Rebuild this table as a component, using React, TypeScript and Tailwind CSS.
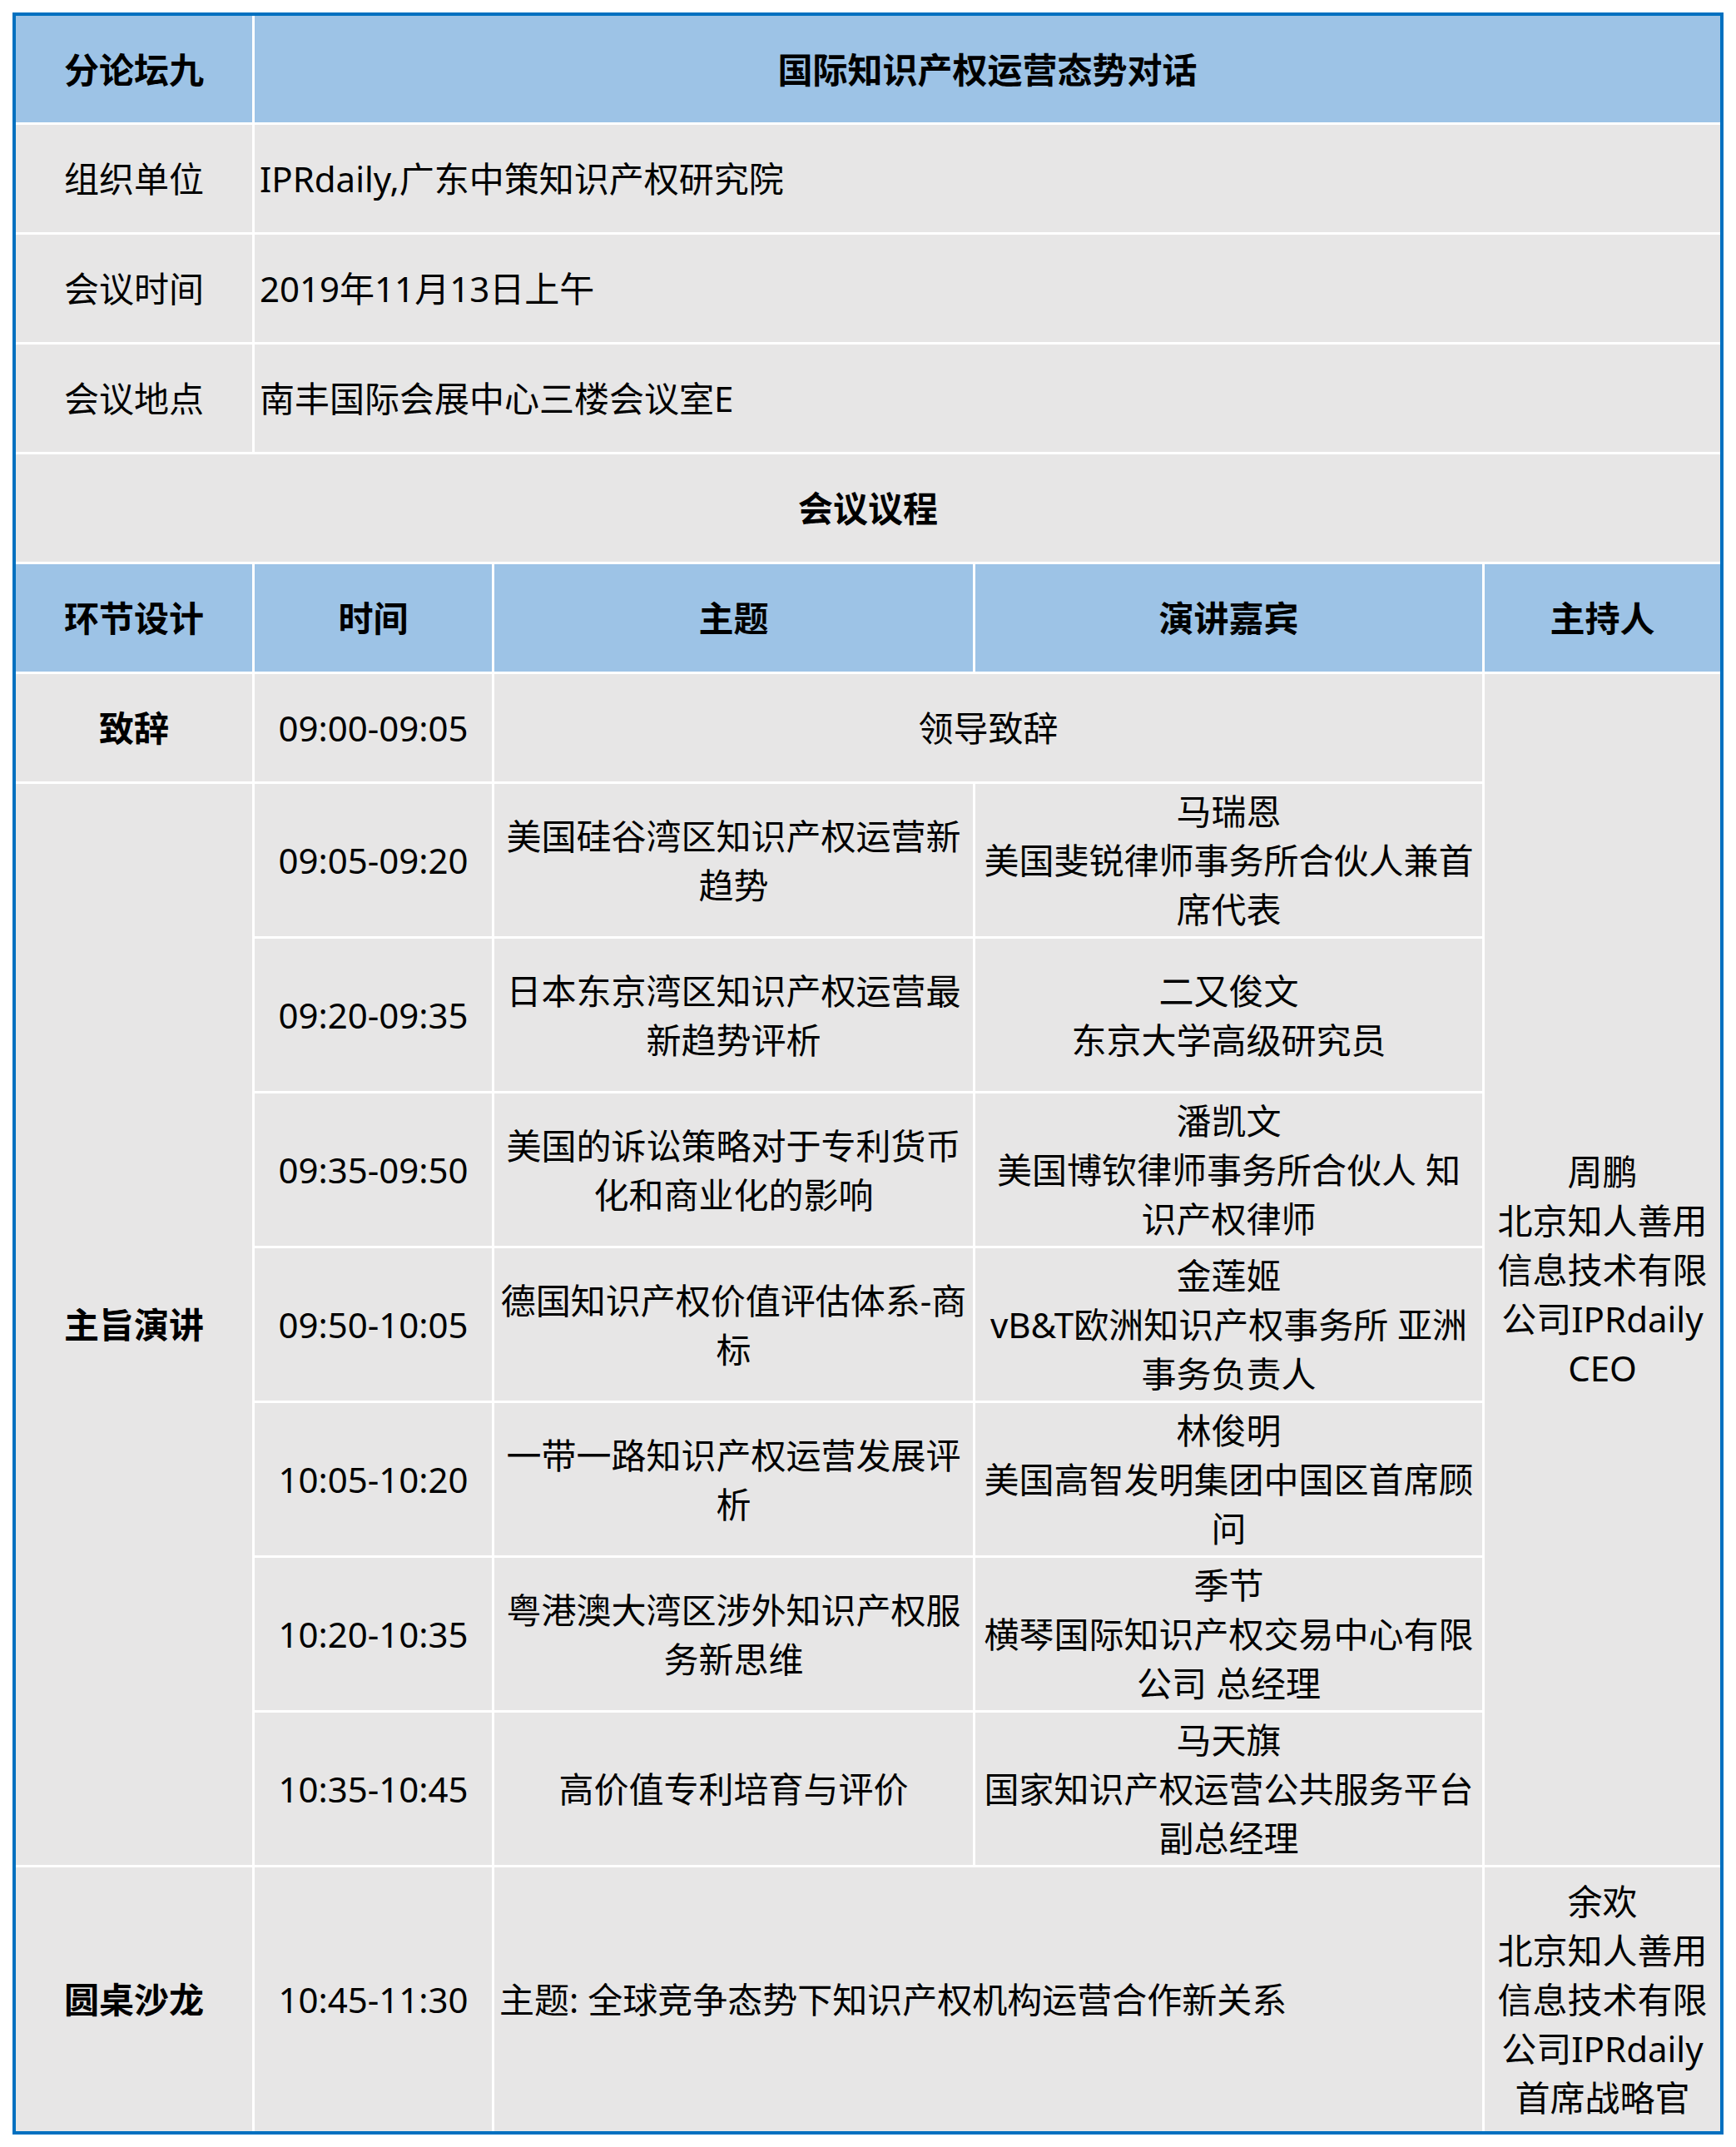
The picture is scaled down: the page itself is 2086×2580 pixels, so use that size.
const font = { fontFamily: '"Noto Sans", "Noto Sans CJK SC", sans-serif' };

type Talk = { time: string; topic: string[]; speaker: string[] };

const talks: Talk[] = [
  { time: "09:05-09:20", topic: ["美国硅谷湾区知识产权运营新", "趋势"], speaker: ["马瑞恩", "美国斐锐律师事务所合伙人兼首", "席代表"] },
  { time: "09:20-09:35", topic: ["日本东京湾区知识产权运营最", "新趋势评析"], speaker: ["二又俊文", "东京大学高级研究员"] },
  { time: "09:35-09:50", topic: ["美国的诉讼策略对于专利货币", "化和商业化的影响"], speaker: ["潘凯文", "美国博钦律师事务所合伙人 知", "识产权律师"] },
  { time: "09:50-10:05", topic: ["德国知识产权价值评估体系-商", "标"], speaker: ["金莲姬", "vB&T欧洲知识产权事务所 亚洲", "事务负责人"] },
  { time: "10:05-10:20", topic: ["一带一路知识产权运营发展评", "析"], speaker: ["林俊明", "美国高智发明集团中国区首席顾", "问"] },
  { time: "10:20-10:35", topic: ["粤港澳大湾区涉外知识产权服", "务新思维"], speaker: ["季节", "横琴国际知识产权交易中心有限", "公司 总经理"] },
  { time: "10:35-10:45", topic: ["高价值专利培育与评价"], speaker: ["马天旗", "国家知识产权运营公共服务平台", "副总经理"] },
];

const info = [
  ["组织单位", "IPRdaily,广东中策知识产权研究院"],
  ["会议时间", "2019年11月13日上午"],
  ["会议地点", "南丰国际会展中心三楼会议室E"],
];

function Lines({ lines }: { lines: string[] }) {
  return (
    <div className="text-center">
      {lines.map((l, i) => (
        <div key={i} className="whitespace-pre">{l}</div>
      ))}
    </div>
  );
}

const grey = "bg-[#e7e6e6] flex items-center justify-center";
const blue = "bg-[#9dc3e6] flex items-center justify-center font-bold";

export default function App() {
  return (
    <div className="bg-white min-h-[2580px] pt-[15px] pl-[15px] text-black" style={font}>
      <div className="w-[2056px] border-4 border-[#0070c0] bg-white grid gap-[3px] grid-cols-[284px_285px_575px_609px_283px] grid-rows-[128px_repeat(6,129px)_repeat(7,183px)_317px] text-[42px] leading-[59px]">
        <div className={blue}>分论坛九</div>
        <div className={`${blue} col-span-4`}>国际知识产权运营态势对话</div>

        {info.map(([k, v]) => (
          <>
            <div key={k} className={grey}>{k}</div>
            <div key={k + "v"} className="bg-[#e7e6e6] col-span-4 flex items-center px-[6px]">{v}</div>
          </>
        ))}

        <div className={`${grey} col-span-5 font-bold`}>会议议程</div>

        <div className={blue}>环节设计</div>
        <div className={blue}>时间</div>
        <div className={blue}>主题</div>
        <div className={blue}>演讲嘉宾</div>
        <div className={blue}>主持人</div>

        <div className={`${grey} font-bold`}>致辞</div>
        <div className={grey}>09:00-09:05</div>
        <div className={`${grey} col-span-2`}>领导致辞</div>
        <div className={`${grey} row-span-8`}>
          <Lines lines={["周鹏", "北京知人善用", "信息技术有限", "公司IPRdaily", "CEO"]} />
        </div>

        <div className={`${grey} row-span-7 font-bold`}>主旨演讲</div>
        {talks.map(t => (
          <>
            <div key={t.time} className={grey}>{t.time}</div>
            <div key={t.time + "t"} className={grey}><Lines lines={t.topic} /></div>
            <div key={t.time + "s"} className={grey}><Lines lines={t.speaker} /></div>
          </>
        ))}

        <div className={`${grey} font-bold`}>圆桌沙龙</div>
        <div className={grey}>10:45-11:30</div>
        <div className="bg-[#e7e6e6] col-span-2 flex items-center px-[6px]">主题: 全球竞争态势下知识产权机构运营合作新关系</div>
        <div className={grey}>
          <Lines lines={["余欢", "北京知人善用", "信息技术有限", "公司IPRdaily", "首席战略官"]} />
        </div>
      </div>
    </div>
  );
}
